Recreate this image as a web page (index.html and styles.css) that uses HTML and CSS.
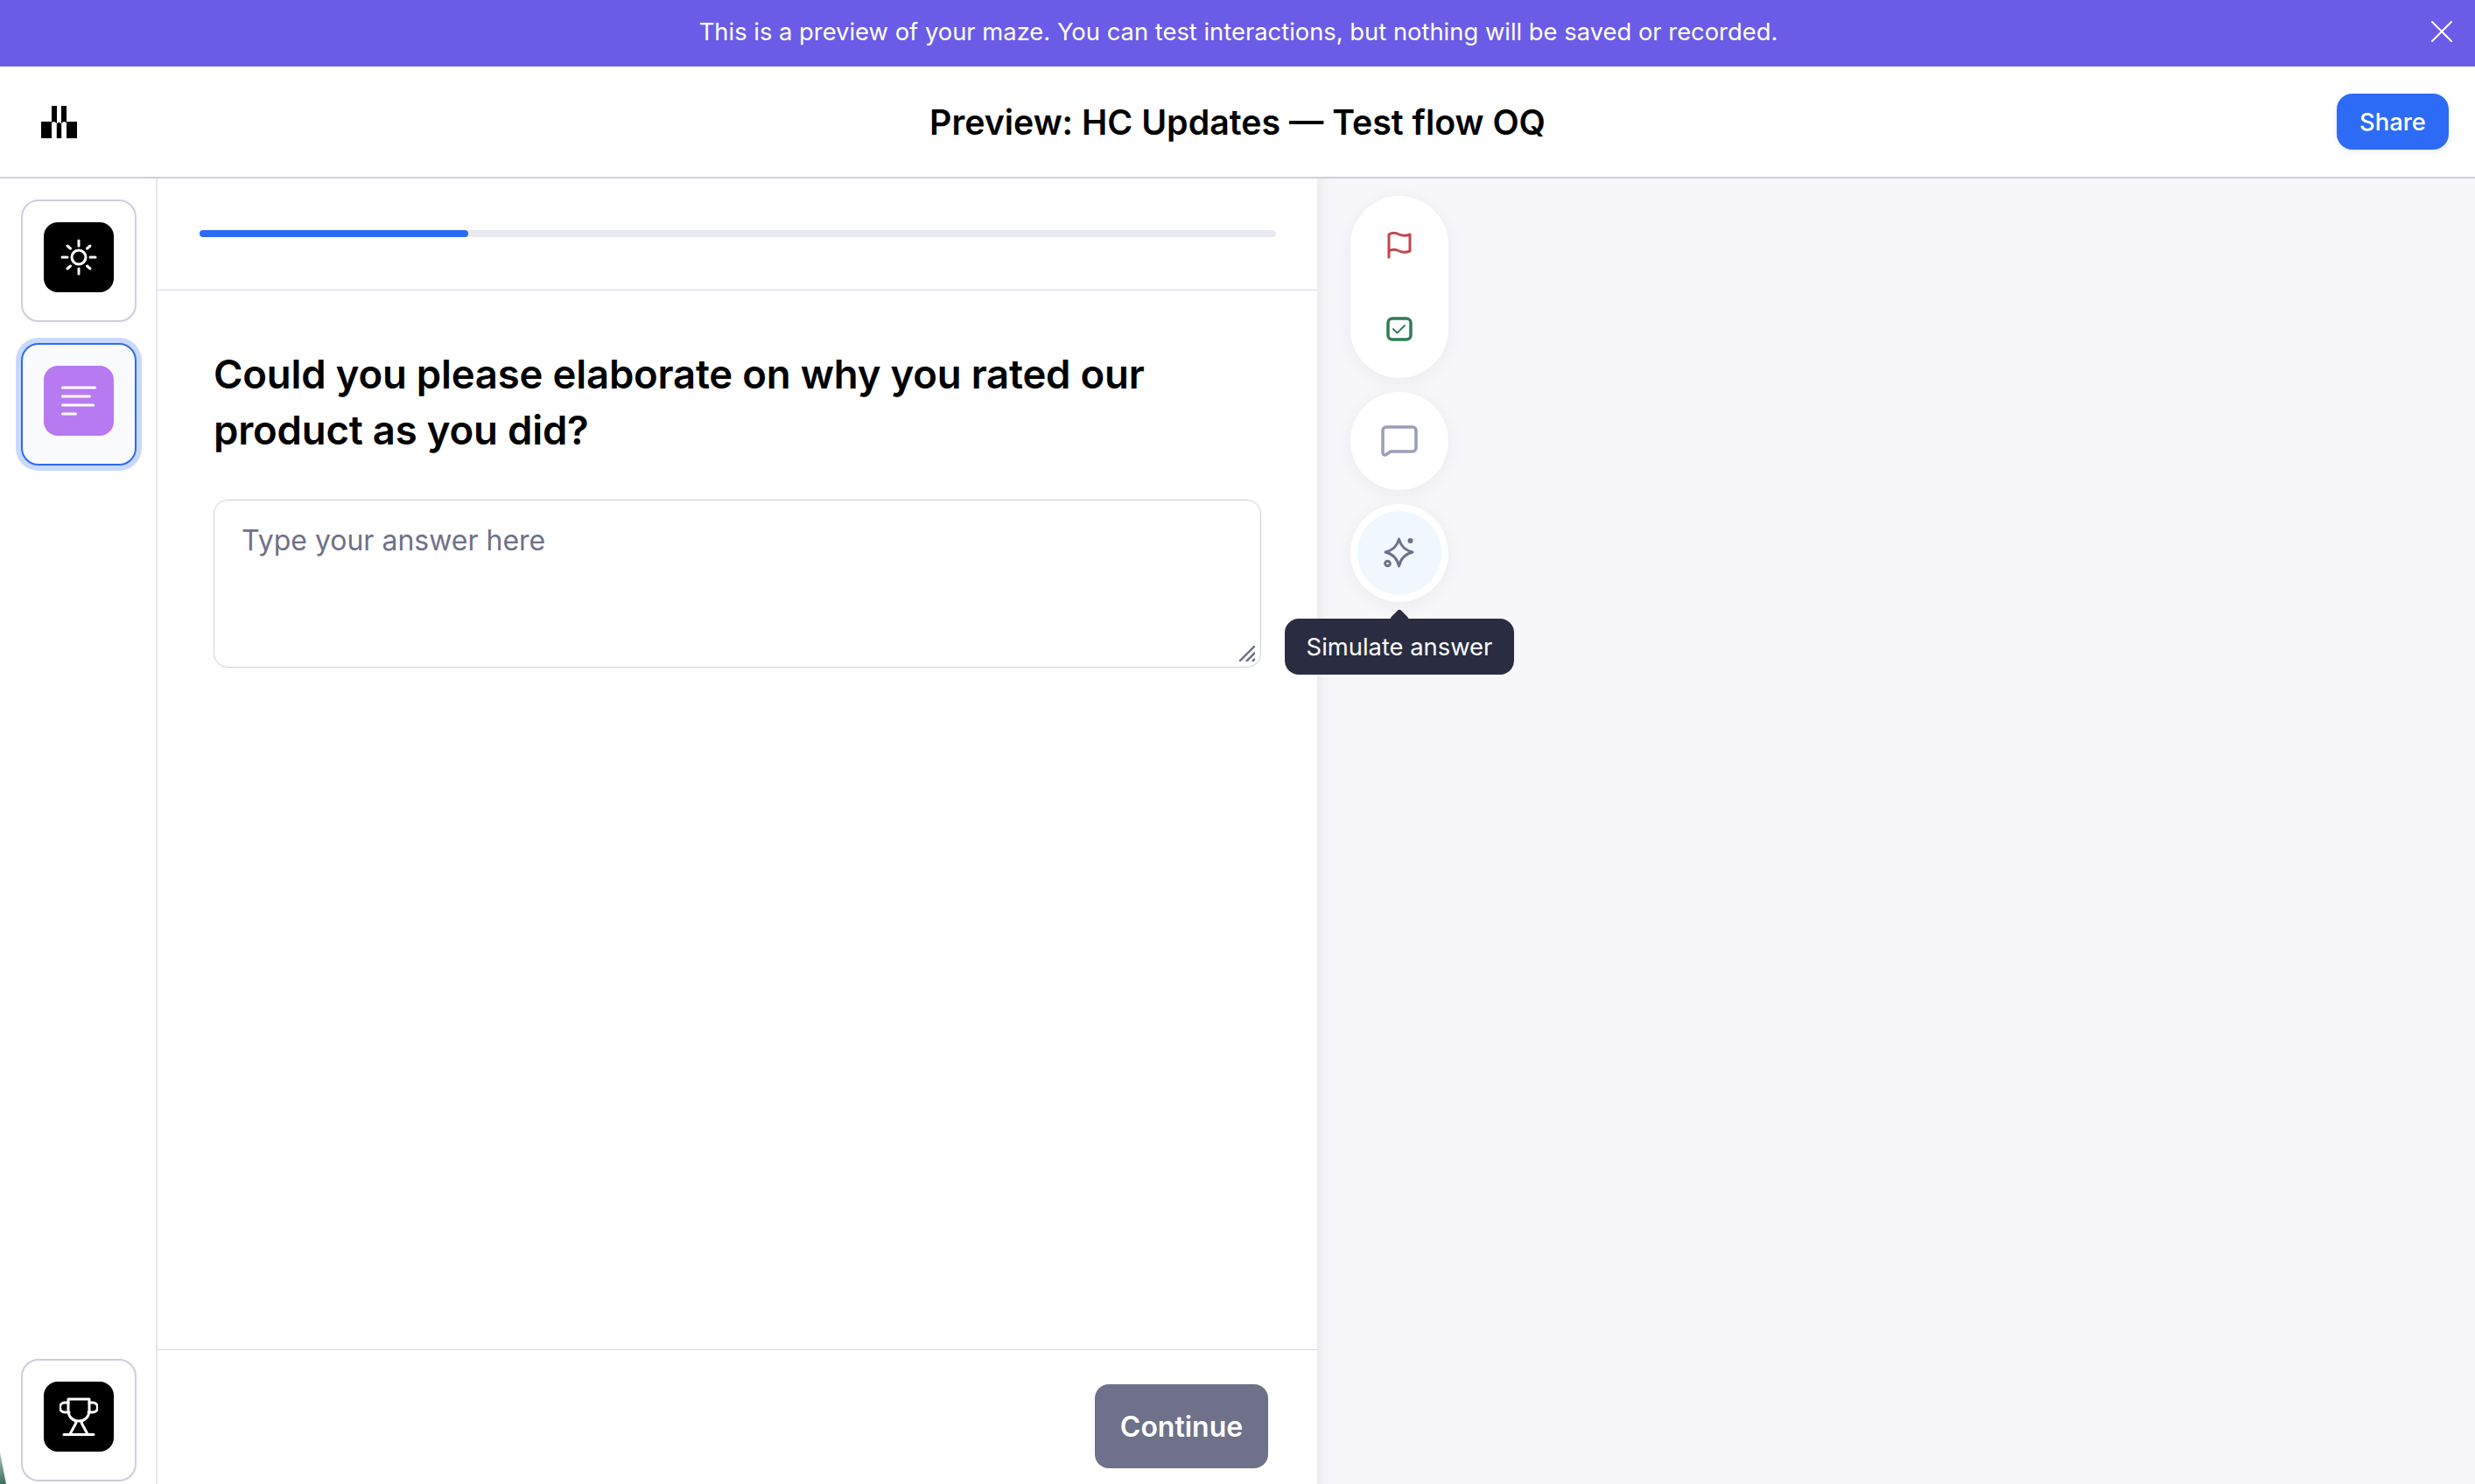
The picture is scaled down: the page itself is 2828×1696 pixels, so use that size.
FILE: index.html
```html
<!DOCTYPE html>
<html lang="en">
  <head>
    <meta charset="UTF-8" />
    <meta name="viewport" content="width=device-width, initial-scale=1.0" />
    <title>Preview: HC Updates — Test flow OQ</title>
    <link rel="stylesheet" href="styles.css">
  </head>
  <body>
    <div class="banner">
      <p>This is a preview of your maze. You can test interactions, but nothing will be saved or recorded.</p>
      <button class="banner_close" aria-label="Close">
        <svg viewBox="0 0 24 24" width="24" height="24" fill="none" stroke="#fff" stroke-width="2" stroke-linecap="round"><path d="M1 1l22 22M23 1L1 23"/></svg>
      </button>
    </div>

    <header class="top">
      <div class="top_side">
        <svg class="logo" viewBox="0 0 41 37" width="41" height="37" fill="#000">
          <path d="M0 18h11.500l0.500 1h0v18H0zM29 19l0.500-1H41v19H29zM17.800 20.500l2.700-2 2.700 2V37h-5.400z"/>
          <path d="M12 0h6v20l-3-2-3 1zM23 0h6v19l-3-1-3 2z"/>
        </svg>
      </div>
      <h1>Preview: HC Updates — Test flow OQ</h1>
      <div class="top_side right">
        <button class="share">Share</button>
      </div>
    </header>

    <div class="content">
      <nav class="steps">
        <div class="step">
          <span class="step_icon black">
            <svg viewBox="0 0 44 44" width="44" height="44" fill="none" stroke="#fff" stroke-width="3" stroke-linecap="round">
              <circle cx="22" cy="22" r="8"/>
              <path d="M22 3v6M22 35v6M3 22h6M35 22h6M9 9l3.500 3M35 9l-3.500 3M9 35l3.500-3M35 35l-3.500-3"/>
            </svg>
          </span>
        </div>
        <div class="step active">
          <span class="step_icon purple">
            <svg viewBox="0 0 44 44" width="44" height="44" fill="none" stroke="#fff" stroke-width="3" stroke-linecap="round">
              <path d="M3.500 7h37M3.500 17h31M3.500 27h35M3.500 37h15"/>
            </svg>
          </span>
        </div>
        <div class="step last">
          <span class="step_icon black">
            <svg viewBox="0 0 44 44" width="44" height="44" fill="none" stroke="#fff" stroke-width="3" stroke-linecap="round" stroke-linejoin="round">
              <path d="M10 2h24v13c0 7-5 12-12 12s-12-5-12-12z"/>
              <path d="M10 6H6a4.800 4.800 0 0 0 0 11h5M34 6h4a4.800 4.800 0 0 1 0 11h-5"/>
              <path d="M18 27l1 2-7 13M26 27l-1 2 7 13M5 42.500h34"/>
            </svg>
          </span>
        </div>
      </nav>

      <main class="panel">
        <div class="progress_row">
          <div class="progress"><div class="progress_fill"></div></div>
        </div>
        <div class="question">
          <h2>Could you please elaborate on why you rated our<br />product as you did?</h2>
          <div class="answer">
            <span class="placeholder">Type your answer here</span>
            <svg class="grip" viewBox="0 0 18 18" width="18" height="18" stroke="#6e7189" stroke-width="2.500">
              <path d="M0 18L18 0M8 18L18 8M15 18l3-3"/>
            </svg>
          </div>
        </div>
        <div class="panel_foot">
          <button class="continue">Continue</button>
        </div>
      </main>

      <section class="canvas">
        <div class="tools">
          <div class="fab fab_pill">
            <svg viewBox="0 0 28 32" width="28" height="32" fill="none" stroke="#c4444f" stroke-width="3" stroke-linecap="round" stroke-linejoin="round">
              <path d="M2 30V4c4-2.500 8-2 12 0s8 1.500 12 0v19c-4 1.500-8 2-12 0s-8-2.500-12 0"/>
            </svg>
            <svg viewBox="0 0 30 28" width="30" height="28" fill="none" stroke="#2f7d55" stroke-linecap="round" stroke-linejoin="round">
              <rect x="2" y="2" width="26" height="24" rx="5" stroke-width="3.500"/>
              <path d="M8 14l4.500 4.500L21 10" stroke-width="1.800"/>
            </svg>
          </div>
          <div class="fab">
            <svg viewBox="0 0 42 36" width="42" height="36" fill="none" stroke="#9c9eb9" stroke-width="3.500" stroke-linejoin="round">
              <path d="M6 2h30a4 4 0 0 1 4 4v20a4 4 0 0 1-4 4H11l-5 3.500c-2 1-4 0-4-2V6a4 4 0 0 1 4-4z"/>
            </svg>
          </div>
          <div class="fab fab_on">
            <span class="fab_inner">
              <svg viewBox="0 0 36 36" width="36" height="36" fill="none" stroke="#6e7189" stroke-width="3" stroke-linecap="round" stroke-linejoin="round">
                <path d="M17.500 2Q20.500 14 33 17Q20.500 20 17.500 33Q14.500 20 2 17Q14.500 14 17.500 2z"/>
                <circle cx="4.500" cy="30" r="2.800"/>
                <circle cx="30.500" cy="4" r="3" fill="#6e7189" stroke="none"/>
              </svg>
            </span>
            <div class="tooltip">Simulate answer</div>
          </div>
        </div>
      </section>
    </div>
    <span class="corner"></span>
  </body>
</html>
```
FILE: styles.css
```css
* {
  margin: 0;
  padding: 0;
  box-sizing: border-box;
}
html,
body {
  height: 100%;
}
body {
  display: flex;
  flex-direction: column;
  overflow: hidden;
  background: #fff;
  color: #000;
  font-family: Inter, "Liberation Sans", sans-serif;
}
button {
  border: 0;
  font-family: inherit;
  background: none;
}

/* banner */
.banner {
  position: relative;
  height: 76px;
  flex: none;
  display: flex;
  align-items: center;
  justify-content: center;
  padding: 0 0 4px 2px;
  background: #6b5ce7;
  color: #fff;
  font-size: 27.360px;
}
.banner_close {
  position: absolute;
  top: 24px;
  right: 26px;
  display: flex;
}
.banner_close svg {
  display: block;
}

/* header */
.top {
  height: 128px;
  flex: none;
  display: flex;
  align-items: center;
  padding: 0 30px;
  border-bottom: 2px solid #cdcedf;
}
.top_side {
  flex: 1;
  display: flex;
}
.top_side.right {
  justify-content: flex-end;
}
.logo {
  margin-left: 17px;
}
.top h1 {
  font-size: 39.300px;
  font-weight: 600;
}
.share {
  width: 128px;
  height: 64px;
  border-radius: 18px;
  background: #2d6bf6;
  color: #fff;
  font-size: 27.360px;
  font-weight: 500;
  box-shadow: 0 2px 6px rgba(45, 107, 246, 0.15);
}

/* layout */
.content {
  flex: 1;
  min-height: 0;
  display: flex;
}
.steps {
  width: 180px;
  flex: none;
  display: flex;
  flex-direction: column;
  gap: 24px;
  padding: 24px 22px 3px 24px;
  border-right: 2px solid #e6e6f0;
}
.step {
  height: 140px;
  display: flex;
  align-items: flex-start;
  justify-content: center;
  padding-top: 24px;
  border: 2px solid #cdcedf;
  border-radius: 20px;
}
.step.active {
  background: #f9fbff;
  border-color: #2d6bf6;
  box-shadow: 0 0 0 6px #c8d9fc;
}
.step.last {
  margin-top: auto;
}
.step_icon {
  width: 80px;
  height: 80px;
  display: flex;
  align-items: center;
  justify-content: center;
  border-radius: 16px;
}
.step_icon.black {
  background: #000;
}
.step_icon.purple {
  background: #b87af0;
}

/* panel */
.panel {
  width: 1325px;
  flex: none;
  display: flex;
  flex-direction: column;
  position: relative;
  z-index: 1;
}
.progress_row {
  height: 128px;
  flex: none;
  padding: 59px 47px 0 48px;
  border-bottom: 1px solid #d8d8e6;
}
.progress {
  height: 8px;
  border-radius: 4px;
  background: #e9e9f1;
}
.progress_fill {
  width: 307px;
  height: 100%;
  border-radius: 4px;
  background: #2d6bf6;
}
.question {
  flex: 1;
  padding: 64px 64px 0;
}
.question h2 {
  font-size: 45.500px;
  line-height: 64px;
  font-weight: 600;
  letter-spacing: -0.2px;
}
.answer {
  position: relative;
  height: 192px;
  margin-top: 47px;
  padding: 26px 31px;
  border: 1px solid #cdcedf;
  border-radius: 16px;
}
.placeholder {
  display: block;
  font-size: 32px;
  line-height: 40px;
  color: #6e7189;
}
.grip {
  position: absolute;
  right: 6px;
  bottom: 6px;
}
.panel_foot {
  height: 154px;
  flex: none;
  display: flex;
  justify-content: flex-end;
  padding: 39px 56px 0 0;
  border-top: 1px solid #d8d8e6;
}
.continue {
  width: 198px;
  height: 96px;
  border-radius: 16px;
  background: #6e7189;
  color: #fff;
  font-size: 32px;
  font-weight: 600;
}

/* right side */
.canvas {
  flex: 1;
  background: #f7f7fa;
  box-shadow: inset 12px 0 16px -12px rgba(30, 30, 60, 0.1);
}
.tools {
  width: 112px;
  margin: 20px 0 0 38px;
  display: flex;
  flex-direction: column;
  gap: 16px;
}
.fab {
  position: relative;
  width: 112px;
  height: 112px;
  display: flex;
  align-items: center;
  justify-content: center;
  border-radius: 56px;
  background: #fff;
  box-shadow: 0 4px 20px rgba(40, 40, 80, 0.06);
}
.fab_pill {
  height: 208px;
  flex-direction: column;
  gap: 66px;
  padding-bottom: 2px;
}
.fab_inner {
  width: 96px;
  height: 96px;
  display: flex;
  align-items: center;
  justify-content: center;
  border-radius: 50%;
  background: #f0f7ff;
}
.tooltip {
  position: absolute;
  top: 131px;
  left: -75px;
  width: 262px;
  height: 64px;
  display: flex;
  align-items: center;
  justify-content: center;
  border-radius: 16px;
  background: #2a2d42;
  color: #fff;
  font-size: 27.360px;
  white-space: nowrap;
}
.tooltip::before {
  content: "";
  position: absolute;
  top: -8px;
  left: 123px;
  width: 16px;
  height: 16px;
  border-radius: 3px;
  background: #2a2d42;
  transform: rotate(45deg);
}
.corner {
  position: absolute;
  left: 0;
  bottom: 0;
  width: 7px;
  height: 36px;
  background: linear-gradient(#a9c4bb, #3f6f62);
  clip-path: polygon(0 0, 100% 100%, 0 100%);
  z-index: 2;
}
```
